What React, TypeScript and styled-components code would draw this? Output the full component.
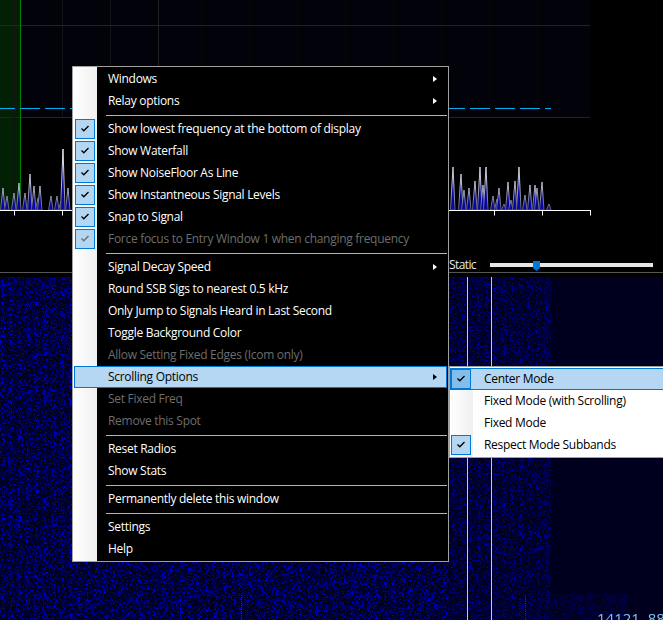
import React, { useEffect, useRef } from 'react';
import styled, { createGlobalStyle } from 'styled-components';

const GlobalStyle = createGlobalStyle`
  html, body {
    margin: 0;
    padding: 0;
    background: #000;
  }
`;

const Screen = styled.div`
  position: relative;
  width: 663px;
  height: 620px;
  overflow: hidden;
  display: flex;
  flex-direction: column;
  background: #000;
  font-family: "Open Sans", "Noto Sans", sans-serif;
  font-size: 12px;
  letter-spacing: -0.29px;
`;

const TopPanel = styled.section`
  height: 272px;
  display: flex;
  flex-direction: column;
  justify-content: space-between;
`;

const SpectrumSvg = styled.svg`
  display: block;
  width: 590.5px;
  height: 216px;
`;

const StaticRow = styled.div`
  height: 14px;
  display: flex;
  align-items: center;
  padding-left: 449px;
`;

const StaticLabel = styled.span`
  width: 41px;
  padding-bottom: 2px;
  color: #e8e8e8;
  letter-spacing: -0.6px;
`;

const SliderTrack = styled.div`
  position: relative;
  width: 163px;
  height: 4px;
  background: #e6e6e6;
`;

const SliderThumb = styled.div`
  position: absolute;
  left: 43px;
  top: -2px;
  width: 7px;
  height: 10px;
  background: #0078d7;
  clip-path: polygon(0 0, 100% 0, 100% 70%, 50% 100%, 0 70%);
`;

const Divider = styled.div`
  height: 1px;
  margin-bottom: 4px;
  background: #565656;
`;

const Waterfall = styled.section`
  position: relative;
  flex: 1;
  background: #00001e;
`;

const NoiseCanvas = styled.canvas`
  display: block;
`;

const FreqLabel = styled.span`
  position: absolute;
  left: 597px;
  top: 331px;
  color: #7cc4f0;
  font-size: 15px;
  line-height: 20px;
  letter-spacing: 0;
  white-space: pre;
`;

const MenuBox = styled.div<{ $left: number; $top: number; $width: number; $gutter: number; $dark?: boolean }>`
  position: absolute;
  left: ${(p) => p.$left}px;
  top: ${(p) => p.$top}px;
  width: ${(p) => p.$width}px;
  box-sizing: border-box;
  border: 1px solid #a0a0a0;
  padding: 1px ${(p) => (p.$dark ? 1 : 0)}px 1px ${(p) => (p.$dark ? 1 : 0)}px;
  background:
    linear-gradient(90deg, #fff 0, #f0f0f0 100%) no-repeat 0 0 / ${(p) => p.$gutter}px 100%,
    ${(p) => (p.$dark ? '#000' : '#fff')};
  background-origin: padding-box;
`;

const Row = styled.div<{ $active?: boolean; $disabled?: boolean; $dark?: boolean }>`
  height: 22px;
  box-sizing: border-box;
  display: flex;
  align-items: center;
  padding-right: 9px;
  border: 1px solid ${(p) => (p.$active ? '#0078d7' : 'transparent')};
  background: ${(p) => (p.$active ? '#b5d7f3' : 'transparent')};
  color: ${(p) => {
    if (p.$disabled) return '#6d6d6d';
    if (p.$active || !p.$dark) return '#000';
    return '#fff';
  }};
  white-space: nowrap;
`;

const CheckSlot = styled.div`
  width: 20px;
  height: 20px;
  margin-right: 13px;
  flex: none;
`;

const CheckBox = styled.div<{ $strong?: boolean }>`
  width: 20px;
  height: 20px;
  box-sizing: border-box;
  border: 1px solid #0078d7;
  background: ${(p) => (p.$strong ? '#84bcea' : '#b3d7f3')};
  display: flex;
  align-items: center;
  justify-content: center;
  svg {
    display: block;
    margin-bottom: 2px;
  }
`;

const Label = styled.span`
  flex: 1;
  padding-bottom: 2px;
`;

const Arrow = styled.span<{ $active?: boolean }>`
  width: 0;
  height: 0;
  border-style: solid;
  border-width: 3px 0 3px 4px;
  border-color: transparent transparent transparent ${(p) => (p.$active ? '#000' : '#fff')};
`;

const Separator = styled.div`
  height: 1px;
  margin: 3px 0 2px 32px;
  background: #b4b4b4;
`;

type Item =
  | { sep: true }
  | { sep?: false; label: string; checked?: boolean; disabled?: boolean; active?: boolean; arrow?: boolean };

const mainItems: Item[] = [
  { label: 'Windows', arrow: true },
  { label: 'Relay options', arrow: true },
  { sep: true },
  { label: 'Show lowest frequency at the bottom of display', checked: true },
  { label: 'Show Waterfall', checked: true },
  { label: 'Show NoiseFloor As Line', checked: true },
  { label: 'Show Instantneous Signal Levels', checked: true },
  { label: 'Snap to Signal', checked: true },
  { label: 'Force focus to Entry Window 1 when changing frequency', checked: true, disabled: true },
  { sep: true },
  { label: 'Signal Decay Speed', arrow: true },
  { label: 'Round SSB Sigs to nearest 0.5 kHz' },
  { label: 'Only Jump to Signals Heard in Last Second' },
  { label: 'Toggle Background Color' },
  { label: 'Allow Setting Fixed Edges (Icom only)', disabled: true },
  { label: 'Scrolling Options', arrow: true, active: true },
  { label: 'Set Fixed Freq', disabled: true },
  { label: 'Remove this Spot', disabled: true },
  { sep: true },
  { label: 'Reset Radios' },
  { label: 'Show Stats' },
  { sep: true },
  { label: 'Permanently delete this window' },
  { sep: true },
  { label: 'Settings' },
  { label: 'Help' },
];

const subItems: Item[] = [
  { label: 'Center Mode', checked: true, active: true },
  { label: 'Fixed Mode (with Scrolling)' },
  { label: 'Fixed Mode' },
  { label: 'Respect Mode Subbands', checked: true },
];

const CheckMark = ({ color }: { color: string }) => (
  <svg width="8" height="7" viewBox="0 0 8 7">
    <path d="M0.5 3.5 L2.8 5.8 L7.5 1" fill="none" stroke={color} strokeWidth="1.3" />
  </svg>
);

const MenuRows = ({ items, dark }: { items: Item[]; dark?: boolean }) => (
  <>
    {items.map((item, i) => {
      if (item.sep) return <Separator key={i} />;
      return (
        <Row key={i} $active={item.active} $disabled={item.disabled} $dark={dark}>
          <CheckSlot>
            {item.checked && (
              <CheckBox $strong={item.active}>
                <CheckMark color={item.disabled ? '#6d6d6d' : '#000'} />
              </CheckBox>
            )}
          </CheckSlot>
          <Label>{item.label}</Label>
          {item.arrow && <Arrow $active={item.active} />}
        </Row>
      );
    })}
  </>
);

// peak x, peak top y
const peaks: [number, number][] = [
  [3, 188], [7, 196], [14, 193], [19, 183], [25, 193], [30, 174], [34, 186], [38, 198], [40, 186],
  [51, 196], [57, 196], [61, 201], [63, 149], [68, 188],
  [453, 167], [461, 174], [464, 190], [469, 188], [475, 181], [480, 167], [483, 185], [486, 167],
  [493, 196], [497, 199], [499, 188], [504, 204], [508, 182], [511, 200], [515, 181], [519, 167],
  [525, 195], [530, 185], [535, 185], [537, 188], [542, 182], [549, 204],
];

const ticks = Array.from({ length: 13 }, (_, i) => 14.5 + i * 48);

const peakPath = (x: number, top: number) => `M${x - 2.5} 210 L${x} ${top} L${x + 2} 210 Z`;

const Spectrum = () => (
  <SpectrumSvg viewBox="0 0 590.5 216">
    <defs>
      <linearGradient id="peakStroke" gradientUnits="userSpaceOnUse" x1="0" y1="150" x2="0" y2="210">
        <stop offset="0" stopColor="#f0f0f8" />
        <stop offset="0.6" stopColor="#b8b8c8" />
        <stop offset="1" stopColor="#585870" />
      </linearGradient>
    </defs>
    <rect x="0" y="0" width="590" height="117" fill="#02020a" />
    <rect x="0" y="0" width="20" height="210" fill="#022004" />
    {ticks.map((x, i) => (
      <line key={i} x1={x} y1="0" x2={x} y2="117" stroke={i === 3 ? '#222' : i < 3 ? '#141416' : '#000'} />
    ))}
    <line x1="0" y1="25.5" x2="590" y2="25.5" stroke="#22222a" />
    <line x1="0" y1="117.5" x2="590" y2="117.5" stroke="#22222a" />
    <line x1="14.5" y1="117" x2="14.5" y2="210" stroke="#0a140a" />
    <line x1="20.5" y1="0" x2="20.5" y2="210" stroke="#008000" />
    <line x1="-5" y1="108.5" x2="551" y2="108.5" stroke="#00aeef" strokeDasharray="20 5" />
    {peaks.map(([x, top], i) => (
      <path key={i} d={peakPath(x, top)} fill="#0606a0" stroke="url(#peakStroke)" strokeWidth="1" />
    ))}
    <line x1="0" y1="210.5" x2="590.5" y2="210.5" stroke="#fff" />
    {ticks.map((x) => (
      <line key={x} x1={x} y1="210" x2={x} y2="215.5" stroke="#fff" />
    ))}
  </SpectrumSvg>
);

const useNoise = (ref: React.RefObject<HTMLCanvasElement | null>) => {
  useEffect(() => {
    const canvas = ref.current;
    if (!canvas) return;
    const ctx = canvas.getContext('2d');
    if (!ctx) return;
    const w = canvas.width;
    const h = canvas.height;
    const img = ctx.createImageData(w, h);
    let seed = 12345;
    // mulberry32
    const rnd = () => {
      seed = (seed + 0x6d2b79f5) | 0;
      let t = Math.imul(seed ^ (seed >>> 15), 1 | seed);
      t = (t + Math.imul(t ^ (t >>> 7), 61 | t)) ^ t;
      return ((t ^ (t >>> 14)) >>> 0) / 4294967296;
    };
    for (let y = 0; y < h; y++) {
      for (let x = 0; x < w; x++) {
        const i = (y * w + x) * 4;
        const inMain = x < 551 && y < 317;
        const inBottom = x < 628 && y >= 317;
        let blue = 30;
        if (inMain || inBottom) {
          const stripe = 0.82 + 0.18 * Math.sin((x * Math.PI * 2) / 8.5);
          const fade = x < 450 ? 1 : 0.72;
          const sparse = x >= 551 ? 0.6 : 1;
          const v = Math.pow(rnd(), 3.4) * stripe * fade * sparse;
          blue = 30 + v * 215;
        }
        img.data[i] = 0;
        img.data[i + 1] = 0;
        img.data[i + 2] = blue;
        img.data[i + 3] = 255;
      }
    }
    ctx.putImageData(img, 0, 0);
    // tuning markers
    ctx.fillStyle = '#90f0a8';
    ctx.fillRect(467, 0, 1, h);
    ctx.fillRect(491, 0, 1, h);
    ctx.fillStyle = '#2020c8';
    for (let y = 318; y < h; y += 2) {
      ctx.fillRect(241, y, 1, 1);
      ctx.fillRect(525, y, 1, 1);
    }
  }, [ref]);
};

export default function App() {
  const canvasRef = useRef<HTMLCanvasElement>(null);
  useNoise(canvasRef);
  return (
    <Screen>
      <GlobalStyle />
      <TopPanel>
        <Spectrum />
        <StaticRow>
          <StaticLabel>Static</StaticLabel>
          <SliderTrack>
            <SliderThumb />
          </SliderTrack>
        </StaticRow>
      </TopPanel>
      <Divider />
      <Waterfall>
        <NoiseCanvas ref={canvasRef} width={663} height={343} />
        <FreqLabel>14121. 88</FreqLabel>
      </Waterfall>
      <MenuBox $left={72} $top={66} $width={377} $gutter={24} $dark>
        <MenuRows items={mainItems} dark />
      </MenuBox>
      <MenuBox $left={449} $top={366} $width={260} $gutter={23}>
        <MenuRows items={subItems} />
      </MenuBox>
    </Screen>
  );
}
